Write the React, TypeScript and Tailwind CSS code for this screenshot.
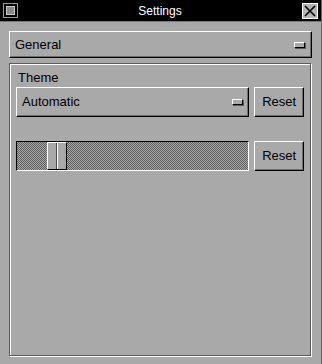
import React from 'react';

const raised =
  'border-t border-l border-t-white border-l-white border-b border-r border-b-black border-r-black shadow-[inset_-1px_-1px_0_#6e6e6e]';

const Indicator: React.FC = () => (
  <span className="block w-[11px] h-[6px] bg-[#a9a9a9] border-t border-l border-white border-b border-r border-b-black border-r-black shadow-[1px_1px_0_#5a5a5a]" />
);

const Dropdown: React.FC<{ label: string; className?: string }> = ({ label, className }) => (
  <div className={`flex items-center justify-between pl-[5px] pr-[5px] ${raised} ${className ?? ''}`}>
    <span>{label}</span>
    <Indicator />
  </div>
);

const ResetButton: React.FC = () => (
  <button className={`w-[50px] h-[30px] flex items-center justify-center ${raised}`}>Reset</button>
);

const App: React.FC = () => {
  return (
    <div
      className="w-[322px] h-[364px] bg-[#a9a9a9] flex flex-col text-[13px] text-black border-r border-[#6a6a6a]"
      style={{ fontFamily: '"Liberation Sans", Arial, sans-serif' }}
    >
      {/* title bar */}
      <div className="h-[22px] bg-black flex items-center px-[3px] border-b border-[#7a7a7a]">
        <div className="w-[15px] h-[15px] border border-[#9a9a9a] flex items-center justify-center">
          <span className="block w-[9px] h-[9px] bg-[#8a8a8a] border border-[#c8c8c8]" />
        </div>
        <div className="flex-1 text-center text-white text-[12px]">Settings</div>
        <div className="w-[16px] h-[16px] bg-[#b4b4b4] border border-white flex items-center justify-center">
          <svg width="12" height="12" viewBox="0 0 12 12">
            <path d="M1 1L11 11M11 1L1 11" stroke="#000" strokeWidth="1.6" />
          </svg>
        </div>
      </div>

      <div className="flex-1 flex flex-col px-[9px] pt-[9px] pb-[8px]">
        <Dropdown label="General" className="h-[27px] pr-[6px]" />

        {/* group */}
        <div className="mt-[5px] flex-1 border border-[#5a5a5a] shadow-[1px_1px_0_white,inset_1px_1px_0_white] px-[6px] pt-[5px] mr-[1px]">
          <div className="ml-[2px] h-[17px] leading-[17px]">Theme</div>
          <div className="mt-[1px] flex gap-[5px]">
            <Dropdown label="Automatic" className="w-[235px] h-[30px]" />
            <ResetButton />
          </div>

          <div className="mt-[24px] flex gap-[5px]">
            <div className="w-[235px] h-[30px] border-t border-l border-black border-b border-r border-b-white border-r-white bg-[repeating-conic-gradient(#5c5c5c_0%_25%,#a9a9a9_0%_50%)] bg-[length:2px_2px] pl-[30px]">
              <div className="w-[20px] h-full bg-[#a9a9a9] border-l border-t border-white border-r border-b border-r-black border-b-black flex justify-center">
                <span className="block w-[1px] h-full bg-[#4a4a4a]" />
                <span className="block w-[1px] h-full bg-white" />
              </div>
            </div>
            <ResetButton />
          </div>
        </div>
      </div>
    </div>
  );
};

export default App;
